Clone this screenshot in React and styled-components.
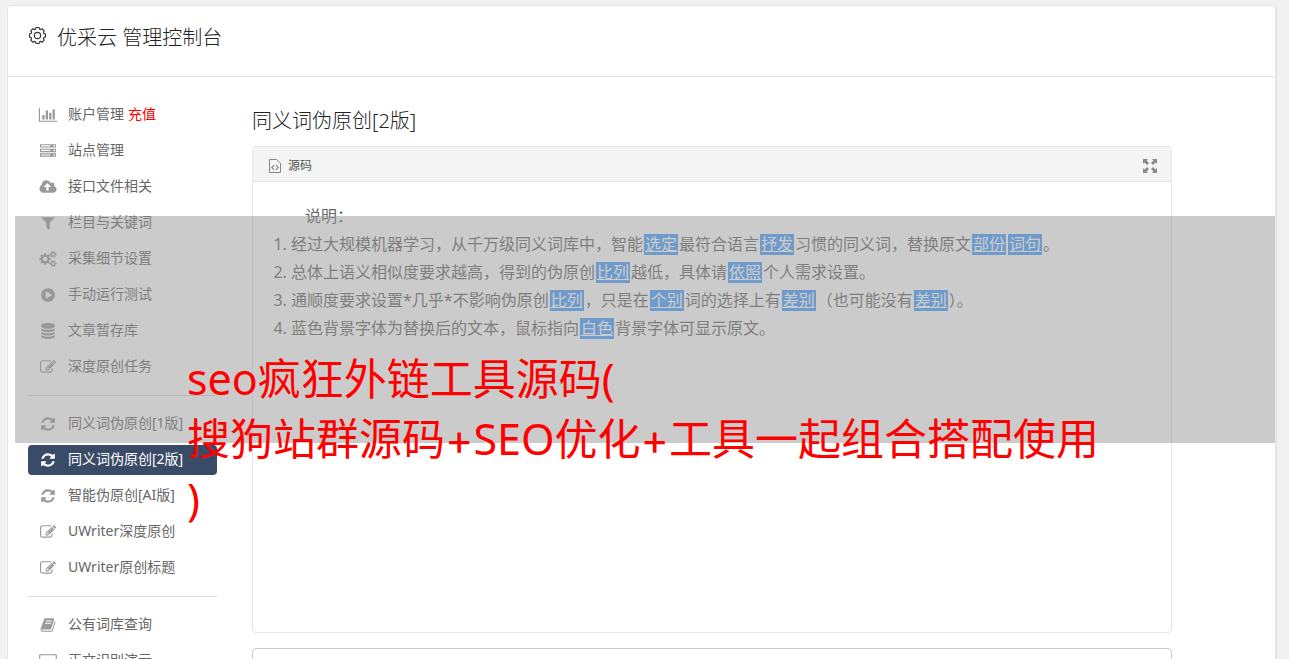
import styled, { createGlobalStyle, css } from 'styled-components';

const GlobalStyle = createGlobalStyle`
  * {
    box-sizing: border-box;
  }

  body {
    margin: 0;
    color: #222;
    background: #f1f1f1;
    font-family: 'Noto Sans', 'Noto Sans CJK SC', sans-serif;
    font-size: 14px;
  }
`;

const Page = styled.div`
  position: relative;
  display: flex;
  height: 100vh;
  padding: 5px 12px 0 7px;
  overflow: hidden;
`;

const Card = styled.div`
  flex: 1;
  min-width: 0;
  height: max-content;
  background: #fff;
  border: 1px solid #e5e5e5;
  border-right-width: 2px;
  border-radius: 4px 4px 0 0;
`;

const Header = styled.header`
  display: flex;
  align-items: flex-start;
  gap: 10px;
  padding: 17px 20px 23px;
  border-bottom: 1px solid #e5e5e5;

  & > svg {
    margin-top: 3px;
  }
`;

const Brand = styled.h1`
  margin: 0;
  font-size: 20px;
  font-weight: 300;
  line-height: 30px;
`;

const Columns = styled.div`
  display: flex;
  gap: 35px;
  padding: 23px 103px 20px 20px;
`;

const Sidebar = styled.nav`
  flex: 0 0 189px;
`;

const Menu = styled.ul`
  display: flex;
  flex-direction: column;
  gap: 6px;
  margin: 0;
  padding: 0;
  list-style: none;

  & + & {
    margin-top: 13px;
    padding-top: 13px;
    border-top: 1px solid #ddd;
  }
`;

const MenuLink = styled.a`
  display: flex;
  height: 30px;
  padding-left: 10px;
  border-radius: 4px;
  color: #666;
  line-height: 28px;
  text-decoration: none;
  white-space: nowrap;

  & > svg {
    color: #999;
  }

  ${({ $active }) =>
    $active &&
    css`
      color: #fff;
      background: #3a4b67;

      & > svg {
        color: #fff;
      }
    `}
`;

const MenuIcon = styled.svg`
  flex: none;
  width: 20px;
  height: 16px;
  margin: 7px 10px 0 0;
  fill: currentColor;
`;

const Recharge = styled.span`
  margin-left: 4px;
  color: #f00;
`;

const Main = styled.main`
  flex: 1;
  min-width: 0;
`;

const Title = styled.h2`
  margin: 5px 0 10px;
  font-size: 20px;
  font-weight: 300;
  line-height: 31px;
`;

const Panel = styled.section`
  min-height: 487px;
  border: 1px solid #e5e5e5;
  border-radius: 4px;
`;

const PanelHeader = styled.div`
  display: flex;
  align-items: center;
  height: 35px;
  padding: 3px 14px 0 16px;
  border-bottom: 1px solid #e5e5e5;
  border-radius: 3px 3px 0 0;
  background: #f4f4f4;
  color: #555;
`;

const PanelTitle = styled.h3`
  margin: 0 auto 0 7px;
  font-size: 12px;
  font-weight: 400;
  line-height: 30px;
`;

const ExpandButton = styled.button`
  display: flex;
  padding: 0;
  border: 0;
  background: none;
  color: #8a8a8a;
`;

const PanelBody = styled.div`
  padding: 20px;
  color: #666;
  font-size: 16px;
  line-height: 28px;

  & > p {
    margin: 0;
    text-indent: 32px;
  }

  & > ol {
    margin: 0;
    padding-left: 18px;
  }
`;

const Word = styled.u`
  display: inline-block;
  margin: 0 1px;
  padding: 0 1px;
  line-height: 21px;
  color: #fff;
  background: #459eff;
`;

const SourceInput = styled.textarea`
  display: block;
  width: 100%;
  height: 120px;
  margin-top: 15px;
  border: 1px solid #ccc;
  border-radius: 4px;
  resize: none;
`;

const Banner = styled.div`
  position: absolute;
  top: 216px;
  left: 15px;
  right: 14px;
  height: 227px;
  padding: 133px 0 0 172px;
  background: rgba(151, 151, 151, 0.5);
  color: #f00;
  font-size: 43px;
  line-height: 60px;
  white-space: nowrap;
  pointer-events: none;
`;

const Plus = styled.span`
  font-family: Inter, sans-serif;
`;

const icons = {
  chart: {
    width: 2048,
    path: 'M640 896v512h-256v-512h256zm384-512v1024h-256v-1024h256zm1024 1152v128h-2048v-1536h128v1408h1920zm-640-896v768h-256v-768h256zm384-384v1152h-256v-1152h256z',
  },
  server: {
    width: 1792,
    path: 'M128 1408h1024v-128h-1024v128zm0-512h1024v-128h-1024v128zm1568 448q0-40-28-68t-68-28-68 28-28 68 28 68 68 28 68-28 28-68zm-1568-960h1024v-128h-1024v128zm1568 448q0-40-28-68t-68-28-68 28-28 68 28 68 68 28 68-28 28-68zm0-512q0-40-28-68t-68-28-68 28-28 68 28 68 68 28 68-28 28-68zm96 832v384h-1792v-384h1792zm0-512v384h-1792v-384h1792zm0-512v384h-1792v-384h1792z',
  },
  upload: {
    width: 1920,
    path: 'M1280 864q0-14-9-23l-352-352q-9-9-23-9t-23 9l-351 351q-10 12-10 24 0 14 9 23t23 9h224v352q0 13 9.5 22.5t22.5 9.5h192q13 0 22.5-9.5t9.5-22.5v-352h224q13 0 22.5-9.5t9.5-22.5zm640 288q0 159-112.5 271.5t-271.5 112.5h-1088q-185 0-316.5-131.5t-131.5-316.5q0-130 70-240t188-165q-2-30-2-43 0-212 150-362t362-150q156 0 285.5 87t188.5 231q71-62 166-62 106 0 181 75t75 181q0 76-41 138 130 31 213.5 135.5t83.5 238.5z',
  },
  filter: {
    width: 1792,
    path: 'M1595 295q17 41-14 70l-493 493v742q0 42-39 59-13 5-25 5-27 0-45-19l-256-256q-19-19-19-45v-486l-493-493q-31-29-14-70 17-39 59-39h1280q42 0 59 39z',
  },
  cogs: {
    width: 1920,
    path: 'M896 896q0-106-75-181t-181-75-181 75-75 181 75 181 181 75 181-75 75-181zm768 512q0-52-38-90t-90-38-90 38-38 90q0 53 37.5 90.5t90.5 37.5 90.5-37.5 37.5-90.5zm0-1024q0-52-38-90t-90-38-90 38-38 90q0 53 37.5 90.5t90.5 37.5 90.5-37.5 37.5-90.5zm-384 421v185q0 10-7 19.5t-16 10.5l-155 24q-11 35-32 76 34 48 90 115 7 11 7 20 0 12-7 19-23 30-82.5 89.5t-78.5 59.5q-11 0-21-7l-115-90q-37 19-77 31-11 108-23 155-7 24-30 24h-186q-11 0-20-7.5t-10-17.5l-23-153q-34-10-75-31l-118 89q-7 7-20 7-11 0-21-8-144-133-144-160 0-9 7-19 10-14 41-53t47-61q-23-44-35-82l-152-24q-10-1-17-9.5t-7-19.5v-185q0-10 7-19.5t16-10.5l155-24q11-35 32-76-34-48-90-115-7-11-7-20 0-12 7-20 22-30 82-89t79-59q11 0 21 7l115 90q34-18 77-32 11-108 23-154 7-24 30-24h186q11 0 20 7.5t10 17.5l23 153q34 10 75 31l118-89q8-7 20-7 11 0 21 8 144 133 144 160 0 8-7 19-12 16-42 54t-45 60q23 48 34 82l152 23q10 2 17 10.5t7 19.5zm640 533v140q0 16-149 31-12 27-30 52 51 113 51 138 0 4-4 7-122 71-124 71-8 0-46-47t-52-68q-20 2-30 2t-30-2q-14 21-52 68t-46 47q-2 0-124-71-4-3-4-7 0-25 51-138-18-25-30-52-149-15-149-31v-140q0-16 149-31 13-29 30-52-51-113-51-138 0-4 4-7 4-2 35-20t59-34 30-16q8 0 46 46.5t52 67.5q20-2 30-2t30 2q51-71 92-112l6-2q4 0 124 70 4 3 4 7 0 25-51 138 17 23 30 52 149 15 149 31zm0-1024v140q0 16-149 31-12 27-30 52 51 113 51 138 0 4-4 7-122 71-124 71-8 0-46-47t-52-68q-20 2-30 2t-30-2q-14 21-52 68t-46 47q-2 0-124-71-4-3-4-7 0-25 51-138-18-25-30-52-149-15-149-31v-140q0-16 149-31 13-29 30-52-51-113-51-138 0-4 4-7 4-2 35-20t59-34 30-16q8 0 46 46.5t52 67.5q20-2 30-2t30 2q51-71 92-112l6-2q4 0 124 70 4 3 4 7 0 25-51 138 17 23 30 52 149 15 149 31z',
  },
  play: {
    width: 1792,
    path: 'M896 128q209 0 385.5 103t279.5 279.5 103 385.5-103 385.5-279.5 279.5-385.5 103-385.5-103-279.5-279.5-103-385.5 103-385.5 279.5-279.5 385.5-103zm384 823q32-18 32-55t-32-55l-544-320q-31-19-64-1-32 19-32 56v640q0 37 32 56 16 8 32 8 17 0 32-9z',
  },
  database: {
    width: 1792,
    path: 'M896 768q237 0 443-43t325-127v170q0 69-103 128t-280 93.5-385 34.5-385-34.5-280-93.5-103-128v-170q119 84 325 127t443 43zm0 768q237 0 443-43t325-127v170q0 69-103 128t-280 93.5-385 34.5-385-34.5-280-93.5-103-128v-170q119 84 325 127t443 43zm0-384q237 0 443-43t325-127v170q0 69-103 128t-280 93.5-385 34.5-385-34.5-280-93.5-103-128v-170q119 84 325 127t443 43zm0-1152q208 0 385 34.5t280 93.5 103 128v128q0 69-103 128t-280 93.5-385 34.5-385-34.5-280-93.5-103-128v-128q0-69 103-128t280-93.5 385-34.5z',
  },
  edit: {
    width: 1792,
    path: 'M888 1184l116-116-152-152-116 116v56h96v96h56zm440-720q-16-16-33 1l-350 350q-17 17-1 33t33-1l350-350q17-17 1-33zm80 594v190q0 119-84.5 203.5t-203.5 84.5h-832q-119 0-203.5-84.5t-84.5-203.5v-832q0-119 84.5-203.5t203.5-84.5h832q63 0 117 25 15 7 18 23 3 17-9 29l-49 49q-14 14-32 8-23-6-45-6h-832q-66 0-113 47t-47 113v832q0 66 47 113t113 47h832q66 0 113-47t47-113v-126q0-13 9-22l64-64q15-15 35-7t20 29zm-96-738l288 288-672 672h-288v-288zm444 132l-92 92-288-288 92-92q28-28 68-28t68 28l152 152q28 28 28 68t-28 68z',
  },
  refresh: {
    width: 1792,
    path: 'M1639 1056q0 5-1 7-64 268-268 434.5t-478 166.5q-146 0-282.5-55t-243.5-157l-129 129q-19 19-45 19t-45-19-19-45v-448q0-26 19-45t45-19h448q26 0 45 19t19 45-19 45l-137 137q71 66 161 102t187 36q134 0 250-65t186-179q11-17 53-117 8-23 30-23h192q13 0 22.5 9.5t9.5 22.5zm25-800v448q0 26-19 45t-45 19h-448q-26 0-45-19t-19-45 19-45l138-138q-148-137-349-137-134 0-250 65t-186 179q-11 17-53 117-8 23-30 23h-199q-13 0-22.5-9.5t-9.5-22.5v-7q65-268 270-434.5t480-166.5q146 0 284 55.5t245 156.5l130-129q19-19 45-19t45 19 19 45z',
  },
  book: {
    width: 1792,
    path: 'M1703 478q40 57 18 129l-275 906q-19 64-76.5 107.5t-122.5 43.5h-923q-77 0-148.5-53.5t-99.5-131.5q-24-67-2-127 0-4 3-27t4-37q1-8-3-21.5t-3-19.5q2-11 8-21t16.5-23.5 16.5-23.5q23-38 45-91.5t30-91.5q3-10 .5-30t-.5-28q3-11 17-28t17-23q21-36 42-92t25-90q1-9-2.5-32t.5-28q4-13 22-30.5t22-22.5q19-26 42.5-84.5t27.5-96.5q1-8-3-25.5t-2-26.5q2-8 9-18t18-23 17-21q8-12 16.5-30.5t15-35 16-36 19.5-32 26.5-23.5 36-11.5 47.5 5.5l-1 3q38-9 51-9h761q74 0 114 56t18 130l-274 906q-36 119-71.5 153.5t-128.5 34.5h-869q-27 0-38 15-11 16-1 43 24 70 144 70h923q29 0 56-15.5t35-41.5l300-987q7-22 5-57 38 15 59 43zm-1064 2q-4 13 2 22.5t20 9.5h608q13 0 25.5-9.5t16.5-22.5l21-64q4-13-2-22.5t-20-9.5h-608q-13 0-25.5 9.5t-16.5 22.5zm-83 256q-4 13 2 22.5t20 9.5h608q13 0 25.5-9.5t16.5-22.5l21-64q4-13-2-22.5t-20-9.5h-608q-13 0-25.5 9.5t-16.5 22.5z',
  },
  laptop: {
    width: 2048,
    path: 'M192 128h1664q66 0 113 47t47 113v1024q0 66-47 113t-113 47h-1664q-66 0-113-47t-47-113v-1024q0-66 47-113t113-47zm-32 128v1088h1728v-1088z',
  },
};

const menus = [
  [
    { icon: 'chart', label: '账户管理', extra: '充值' },
    { icon: 'server', label: '站点管理' },
    { icon: 'upload', label: '接口文件相关' },
    { icon: 'filter', label: '栏目与关键词' },
    { icon: 'cogs', label: '采集细节设置' },
    { icon: 'play', label: '手动运行测试' },
    { icon: 'database', label: '文章暂存库' },
    { icon: 'edit', label: '深度原创任务' },
  ],
  [
    { icon: 'refresh', label: '同义词伪原创[1版]' },
    { icon: 'refresh', label: '同义词伪原创[2版]', active: true },
    { icon: 'refresh', label: '智能伪原创[AI版]' },
    { icon: 'edit', label: 'UWriter深度原创' },
    { icon: 'edit', label: 'UWriter原创标题' },
  ],
  [
    { icon: 'book', label: '公有词库查询' },
    { icon: 'laptop', label: '正文识别演示' },
  ],
];

const GearIcon = () => (
  <svg width="19" height="19" viewBox="0 0 20 20" fill="none" stroke="#333" strokeWidth="1.2" aria-hidden="true">
    <path
      strokeLinejoin="round"
      d="M8.3 1.6h3.4l.4 1.7 1.3.5 1.5-.9 2.2 2.2-.9 1.5.5 1.3 1.7.4v3.4l-1.7.4-.5 1.3.9 1.5-2.2 2.2-1.5-.9-1.3.5-.4 1.7H8.3l-.4-1.7-1.3-.5-1.5.9-2.2-2.2.9-1.5-.5-1.3-1.7-.4V8.3l1.7-.4.5-1.3-.9-1.5 2.2-2.2 1.5.9 1.3-.5z"
    />
    <circle cx="10" cy="10" r="3.3" />
  </svg>
);

const CodeFileIcon = () => (
  <svg width="12" height="14" viewBox="0 0 12 14" fill="none" stroke="#888" aria-hidden="true">
    <path d="M.5.5h7.2l3.8 3.6v9.4H.5z" />
    <path strokeWidth="1.2" d="M5 6.2 2.8 8.5 5 10.8M7 6.2l2.2 2.3L7 10.8" />
  </svg>
);

const ExpandIcon = () => (
  <svg width="14" height="14" viewBox="0 0 14 14" fill="currentColor" aria-hidden="true">
    <path d="M0 0h5L3.6 1.4 6 4 4 6 1.4 3.6 0 5zM14 0v5l-1.4-1.4L10 6 8 4l2.4-2.6L9 0zM0 14V9l1.4 1.4L4 8l2 2-2.4 2.6L5 14zM14 14H9l1.4-1.4L8 10l2-2 2.6 2.4L14 9z" />
  </svg>
);

const SideMenu = () => (
  <Sidebar>
    {menus.map((items, i) => (
      <Menu key={i}>
        {items.map(({ icon, label, extra, active }) => (
          <li key={label}>
            <MenuLink href="#" $active={active}>
              <MenuIcon viewBox={`0 0 ${icons[icon].width} 1792`} aria-hidden="true">
                <path fillRule={icon === 'laptop' ? 'evenodd' : undefined} d={icons[icon].path} />
              </MenuIcon>
              {label}
              {extra && <Recharge>{extra}</Recharge>}
            </MenuLink>
          </li>
        ))}
      </Menu>
    ))}
  </Sidebar>
);

const App = () => {
  return (
    <>
      <GlobalStyle />
      <Page lang="zh-CN">
        <Card>
          <Header>
            <GearIcon />
            <Brand>优采云 管理控制台</Brand>
          </Header>
          <Columns>
            <SideMenu />
            <Main>
              <Title>同义词伪原创[2版]</Title>
              <Panel>
                <PanelHeader>
                  <CodeFileIcon />
                  <PanelTitle>源码</PanelTitle>
                  <ExpandButton type="button" aria-label="全屏">
                    <ExpandIcon />
                  </ExpandButton>
                </PanelHeader>
                <PanelBody>
                  <p>说明：</p>
                  <ol>
                    <li>
                      经过大规模机器学习，从千万级同义词库中，智能<Word>选定</Word>最符合语言<Word>抒发</Word>
                      习惯的同义词，替换原文<Word>部份</Word>
                      <Word>词句</Word>。
                    </li>
                    <li>
                      总体上语义相似度要求越高，得到的伪原创<Word>比列</Word>越低，具体请<Word>依照</Word>
                      个人需求设置。
                    </li>
                    <li>
                      通顺度要求设置*几乎*不影响伪原创<Word>比列</Word>，只是在<Word>个别</Word>
                      词的选择上有<Word>差别</Word>（也可能没有<Word>差别</Word>）。
                    </li>
                    <li>
                      蓝色背景字体为替换后的文本，鼠标指向<Word>白色</Word>背景字体可显示原文。
                    </li>
                  </ol>
                </PanelBody>
              </Panel>
              <SourceInput aria-label="源码" />
            </Main>
          </Columns>
        </Card>
        <Banner>
          seo疯狂外链工具源码(
          <br />
          搜狗站群源码<Plus>+</Plus>SEO优化<Plus>+</Plus>工具一起组合搭配使用
          <br />)
        </Banner>
      </Page>
    </>
  );
};

export default App;
